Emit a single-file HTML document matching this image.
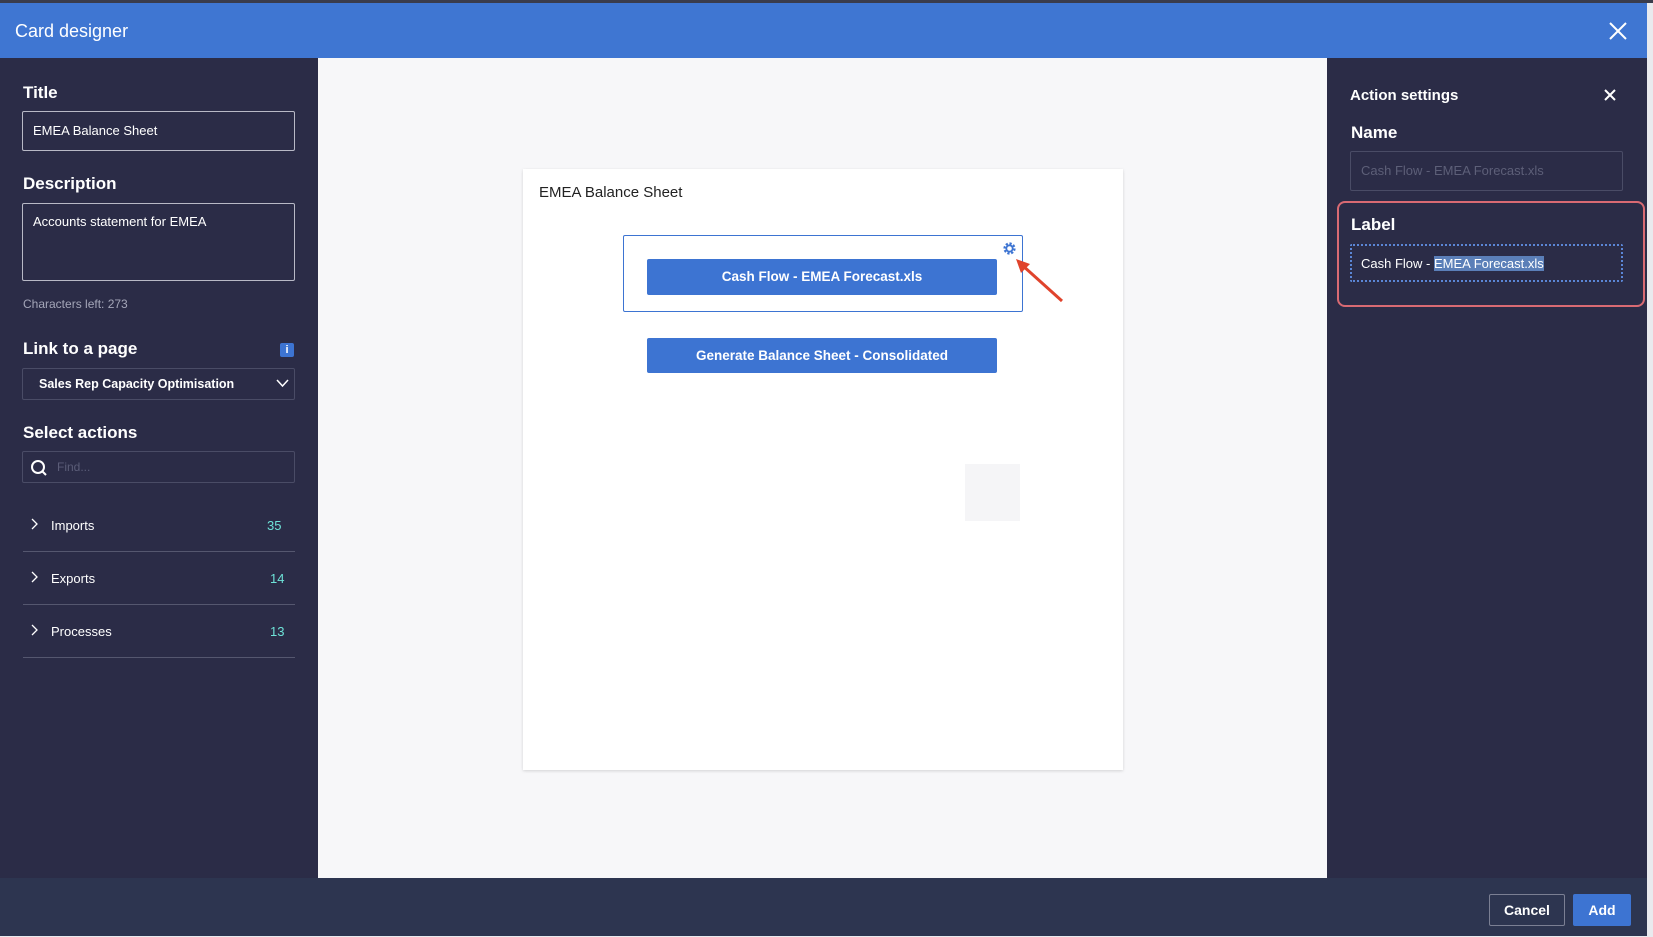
<!DOCTYPE html>
<html><head><style>
*{box-sizing:border-box;margin:0;padding:0}
body{width:1653px;height:937px;background:#e9eaee;font-family:"Liberation Sans",sans-serif;position:relative;overflow:hidden}
.a{position:absolute}
.lbl{color:#fff;font-weight:bold;font-size:17px}
.inp{position:absolute;border:1px solid #8a8ca3;border-radius:2px;color:#fff;font-size:13px;padding-left:10px}
.sm{color:#fff;font-size:13px}
.btn{position:absolute;background:#3d74d2;color:#fff;font-weight:600;font-size:13.5px;text-align:center;border-radius:2px}
</style></head><body>
<div class="a" style="left:0;top:0;width:1653px;height:3px;background:#3a3c4c"></div>
<div class="a" style="left:0;top:3px;width:1647px;height:55px;background:#3f76d2"></div>
<div class="a" style="left:15px;top:21px;color:#fff;font-size:18px">Card designer</div>
<svg class="a" style="left:1609px;top:22px" width="18" height="18"><path d="M1 1L17 17M17 1L1 17" stroke="#fff" stroke-width="2"/></svg>
<div class="a" style="left:0;top:58px;width:318px;height:820px;background:#2b2c47"></div>
<div class="a" style="left:318px;top:58px;width:1009px;height:820px;background:#f7f7f9"></div>
<div class="a" style="left:1327px;top:58px;width:320px;height:820px;background:#2b2c47"></div>
<div class="a" style="left:0;top:878px;width:1647px;height:58px;background:#2d3550"></div>

<div class="a lbl" style="left:23px;top:83px">Title</div>
<div class="inp" style="left:22px;top:111px;width:273px;height:40px;line-height:38px;border-color:#b8b9c6">EMEA Balance Sheet</div>
<div class="a lbl" style="left:23px;top:174px">Description</div>
<div class="inp" style="left:22px;top:203px;width:273px;height:78px;padding-top:10px;border-color:#b8b9c6">Accounts statement for EMEA</div>
<div class="a" style="left:23px;top:297px;color:#a4a6b8;font-size:12px">Characters left: 273</div>
<div class="a lbl" style="left:23px;top:339px">Link to a page</div>
<div class="a" style="left:280px;top:343px;width:14px;height:14px;background:#3d74d2;border-radius:2px;color:#fff;font-size:11px;font-weight:bold;text-align:center;line-height:14px">i</div>
<div class="inp" style="left:22px;top:368px;width:273px;height:32px;line-height:30px;padding-left:16px;font-weight:bold;font-size:12.5px;border-color:#4a4c66">Sales Rep Capacity Optimisation</div>
<svg class="a" style="left:276px;top:379px" width="13" height="9"><path d="M1 1L6.5 7L12 1" stroke="#fff" stroke-width="1.5" fill="none"/></svg>
<div class="a lbl" style="left:23px;top:423px">Select actions</div>
<div class="inp" style="left:22px;top:451px;width:273px;height:32px;border-color:#4a4c66"></div>
<svg class="a" style="left:30px;top:459px" width="18" height="18"><circle cx="8" cy="8" r="6" stroke="#fff" stroke-width="2" fill="none"/><path d="M12.5 12.5L16 16" stroke="#fff" stroke-width="2"/></svg>
<div class="a" style="left:57px;top:460px;color:#5b5d78;font-size:12px">Find...</div>

<div class="a sm" style="left:51px;top:518px">Imports</div><div class="a" style="left:267px;top:518px;color:#6ee3d8;font-size:13px">35</div>
<svg class="a" style="left:31px;top:518px" width="8" height="12"><path d="M1 1L6 6L1 11" stroke="#fff" stroke-width="1.3" fill="none"/></svg>
<div class="a" style="left:23px;top:551px;width:272px;height:1px;background:#55576f"></div>
<div class="a sm" style="left:51px;top:571px">Exports</div><div class="a" style="left:270px;top:571px;color:#6ee3d8;font-size:13px">14</div>
<svg class="a" style="left:31px;top:571px" width="8" height="12"><path d="M1 1L6 6L1 11" stroke="#fff" stroke-width="1.3" fill="none"/></svg>
<div class="a" style="left:23px;top:604px;width:272px;height:1px;background:#55576f"></div>
<div class="a sm" style="left:51px;top:624px">Processes</div><div class="a" style="left:270px;top:624px;color:#6ee3d8;font-size:13px">13</div>
<svg class="a" style="left:31px;top:624px" width="8" height="12"><path d="M1 1L6 6L1 11" stroke="#fff" stroke-width="1.3" fill="none"/></svg>
<div class="a" style="left:23px;top:657px;width:272px;height:1px;background:#55576f"></div>

<div class="a" style="left:523px;top:169px;width:600px;height:601px;background:#fff;box-shadow:0 1px 3px rgba(0,0,0,.15)"></div>
<div class="a" style="left:539px;top:184px;color:#222;font-size:15px">EMEA Balance Sheet</div>
<div class="a" style="left:623px;top:235px;width:400px;height:77px;border:1px solid #3d74d2;border-radius:2px"></div>
<div class="btn" style="left:647px;top:259px;width:350px;height:36px;line-height:36px">Cash Flow - EMEA Forecast.xls</div>
<div class="btn" style="left:647px;top:338px;width:350px;height:35px;line-height:35px">Generate Balance Sheet - Consolidated</div>
<svg class="a" style="left:1001px;top:240px" width="17" height="17" viewBox="0 0 17 17"><circle cx="8.5" cy="8.5" r="5" stroke="#3d74d2" stroke-width="2.2" fill="none" stroke-dasharray="2.2 1.7"/><circle cx="8.5" cy="8.5" r="3.2" stroke="#3d74d2" stroke-width="1.8" fill="none"/></svg>
<svg class="a" style="left:1010px;top:255px" width="56" height="50"><path d="M52 46L12 10" stroke="#e0432c" stroke-width="3"/><path d="M6 4L20 9L11 18Z" fill="#e0432c"/></svg>
<div class="a" style="left:965px;top:464px;width:55px;height:57px;background:#f5f5f7"></div>

<div class="a" style="left:1350px;top:87px;color:#fff;font-size:15px;font-weight:600">Action settings</div>
<svg class="a" style="left:1604px;top:89px" width="12" height="12"><path d="M1 1L11 11M11 1L1 11" stroke="#fff" stroke-width="2"/></svg>
<div class="a lbl" style="left:1351px;top:123px">Name</div>
<div class="inp" style="left:1350px;top:151px;width:273px;height:40px;line-height:38px;color:#5d5f78;border-color:#4a4c66">Cash Flow - EMEA Forecast.xls</div>
<div class="a" style="left:1337px;top:201px;width:308px;height:106px;border:2px solid #d96a73;border-radius:8px"></div>
<div class="a lbl" style="left:1351px;top:215px">Label</div>
<div class="inp" style="left:1350px;top:244px;width:273px;height:38px;line-height:36px;padding-left:9px;border:2px dotted #5b86d6">Cash Flow - <span style="background:#5b7fb8">EMEA Forecast.xls</span></div>

<div class="a" style="left:1489px;top:894px;width:76px;height:32px;border:1px solid #7b7f93;border-radius:2px;color:#fff;font-size:14px;text-align:center;line-height:30px;font-weight:bold">Cancel</div>
<div class="btn" style="left:1573px;top:894px;width:58px;height:32px;line-height:32px;font-size:14px;font-weight:bold">Add</div>
</body></html>
